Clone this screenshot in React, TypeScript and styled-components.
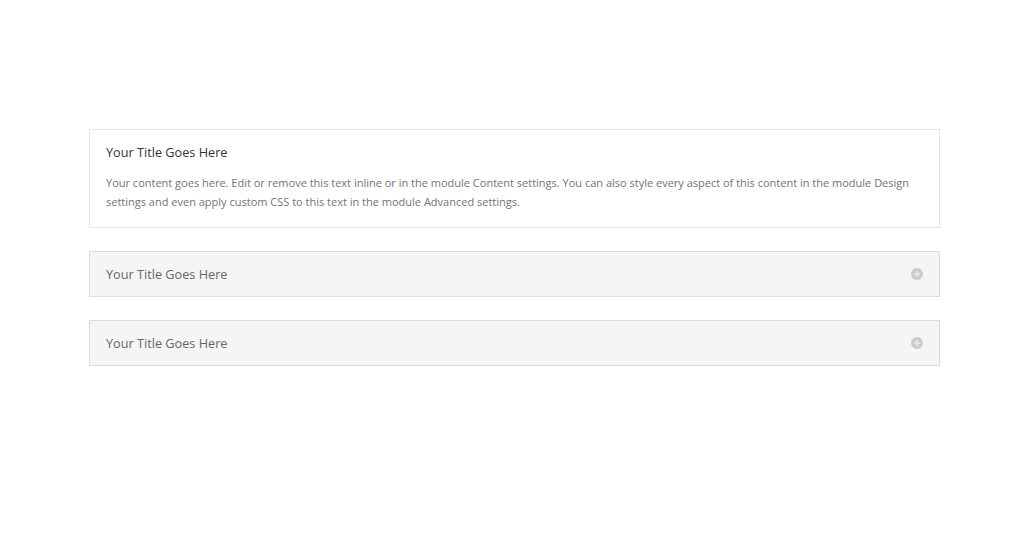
import React from "react";
import styled, { createGlobalStyle } from "styled-components";

const GlobalStyle = createGlobalStyle`
  html, body {
    margin: 0;
    padding: 0;
    background: #ffffff;
  }
  body {
    font-family: "Open Sans", "Liberation Sans", sans-serif;
  }
`;

const Page = styled.div`
  width: 1024px;
  height: 541px;
  overflow: hidden;
  padding: 129px 0 0 89px;
  box-sizing: border-box;
`;

const List = styled.div`
  width: 851px;
  display: flex;
  flex-direction: column;
  gap: 23px;
`;

const Toggle = styled.div<{ $open?: boolean }>`
  box-sizing: border-box;
  border: 1px solid ${(p) => (p.$open ? "#e6e6e6" : "#dcdcdc")};
  background: ${(p) => (p.$open ? "#ffffff" : "#f5f5f5")};
  padding: ${(p) => (p.$open ? "12px 16px 16px" : "12px 16px")};
  min-height: ${(p) => (p.$open ? "99px" : "46px")};
`;

const Header = styled.div`
  display: flex;
  align-items: center;
  justify-content: space-between;
  height: 20px;
`;

const Title = styled.h5<{ $open?: boolean }>`
  margin: 0;
  font-size: 12.7px;
  font-weight: 400;
  line-height: 20px;
  color: ${(p) => (p.$open ? "#333333" : "#666666")};
`;

const Body = styled.p`
  margin: 11px 0 0;
  font-size: 11px;
  line-height: 19px;
  color: #737373;
`;

const PlusIcon = () => (
  <svg width="12" height="12" viewBox="0 0 12 12">
    <circle cx="6" cy="6" r="6" fill="#cccccc" />
    <path d="M6 3v6M3 6h6" stroke="#f2f2f2" strokeWidth="1.2" />
  </svg>
);

const items = [
  {
    open: true,
    title: "Your Title Goes Here",
    body:
      "Your content goes here. Edit or remove this text inline or in the module Content settings. You can also style every aspect of this content in the module Design settings and even apply custom CSS to this text in the module Advanced settings.",
  },
  { open: false, title: "Your Title Goes Here" },
  { open: false, title: "Your Title Goes Here" },
];

export default function App() {
  return (
    <>
      <GlobalStyle />
      <Page>
        <List>
          {items.map((it, i) => (
            <Toggle key={i} $open={it.open}>
              <Header>
                <Title $open={it.open}>{it.title}</Title>
                {!it.open && <PlusIcon />}
              </Header>
              {it.open && <Body>{it.body}</Body>}
            </Toggle>
          ))}
        </List>
      </Page>
    </>
  );
}
